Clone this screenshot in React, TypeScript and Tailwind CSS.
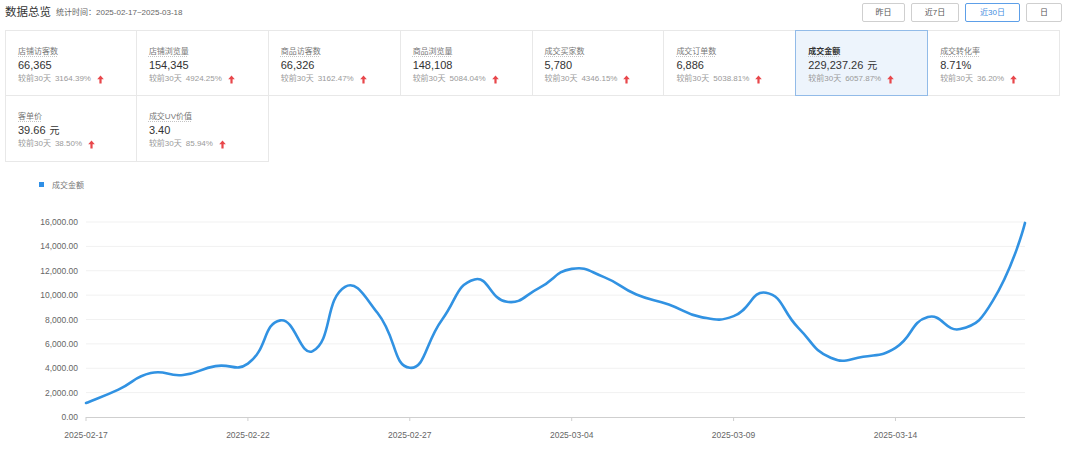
import React from 'react';

type Metric = { label: string; value: string; unit?: string; rate: string; active?: boolean };

const METRICS: Metric[] = [
  { label: '店铺访客数', value: '66,365', rate: '3164.39%' },
  { label: '店铺浏览量', value: '154,345', rate: '4924.25%' },
  { label: '商品访客数', value: '66,326', rate: '3162.47%' },
  { label: '商品浏览量', value: '148,108', rate: '5084.04%' },
  { label: '成交买家数', value: '5,780', rate: '4346.15%' },
  { label: '成交订单数', value: '6,886', rate: '5038.81%' },
  { label: '成交金额', value: '229,237.26', unit: '元', rate: '6057.87%', active: true },
  { label: '成交转化率', value: '8.71%', rate: '36.20%' },
  { label: '客单价', value: '39.66', unit: '元', rate: '38.50%' },
  { label: '成交UV价值', value: '3.40', rate: '85.94%' },
];

const SALES = [
  1150, 2250, 3600, 3450, 4180, 4380, 7930, 5410, 10680, 8550,
  4040, 8000, 11290, 9450, 10600, 12150, 11475, 10055, 9235, 8200,
  8280, 10190, 7320, 4860, 4940, 5680, 8200, 7210, 9500, 15930,
];

const DATES = ['2025-02-17', '2025-02-22', '2025-02-27', '2025-03-04', '2025-03-09', '2025-03-14'];

const X0 = 86;
const X1 = 1025;
const Y0 = 416;
const Y16K = 221;

const px = (i: number) => X0 + ((X1 - X0) / (SALES.length - 1)) * i;
const py = (v: number) => Y0 - ((Y0 - Y16K) * v) / 16000;

// echarts-style smooth line
function smoothPath(pts: { x: number; y: number }[], smooth = 0.5) {
  let d = `M${pts[0].x},${pts[0].y}`;
  let c0x = pts[0].x;
  let c0y = pts[0].y;
  for (let i = 1; i < pts.length; i++) {
    const p = pts[i];
    const prev = pts[i - 1];
    const next = pts[i + 1];
    let c1x = p.x;
    let c1y = p.y;
    let nx = p.x;
    let ny = p.y;
    if (next) {
      const vx = (next.x - prev.x) * smooth;
      const vy = (next.y - prev.y) * smooth;
      const l0 = Math.hypot(p.x - prev.x, p.y - prev.y);
      const l1 = Math.hypot(next.x - p.x, next.y - p.y);
      const r0 = l0 / (l0 + l1);
      const r1 = l1 / (l0 + l1);
      c1x = p.x - vx * r0;
      c1y = p.y - vy * r0;
      nx = p.x + vx * r1;
      ny = p.y + vy * r1;
    }
    d += ` C${c0x.toFixed(1)},${c0y.toFixed(1)} ${c1x.toFixed(1)},${c1y.toFixed(1)} ${p.x.toFixed(1)},${p.y.toFixed(1)}`;
    c0x = nx;
    c0y = ny;
  }
  return d;
}

const UpArrow = () => (
  <svg width="7" height="9" viewBox="0 0 7 9" className="ml-[6px] inline-block">
    <path d="M3.5 0.5 L6.8 4.2 L4.6 4.2 L4.6 8.6 L2.4 8.6 L2.4 4.2 L0.2 4.2 Z" fill="#e8474b" />
  </svg>
);

const MetricCard: React.FC<{ m: Metric; index: number }> = ({ m, index }) => {
  const firstRow = index < 8;
  const firstCol = index % 8 === 0;
  return (
    <div
      className={`h-[66px] pl-[12px] pt-[12px] border-r border-b ${firstRow ? 'border-t' : ''} ${firstCol ? 'border-l' : ''} ${
        m.active
          ? 'relative z-10 bg-[#edf4fc] border-[#92bbe8] shadow-[-1px_0_0_0_#92bbe8]'
          : 'bg-white border-[#e8e8e8]'
      }`}
    >
      <div className="h-[12px] leading-[12px]">
        <span
          className={`text-[8px] underline decoration-dotted decoration-[#c4c4c4] underline-offset-[2px] ${
            m.active ? 'font-bold text-[#333]' : 'text-[#777]'
          }`}
        >
          {m.label}
        </span>
      </div>
      <div className="mt-[2px] h-[16px] leading-[16px] text-[11px] text-[#333]">
        {m.value}
        {m.unit && <span className="ml-[4px] text-[10px]">{m.unit}</span>}
      </div>
      <div className="h-[12px] leading-[12px] text-[8px] text-[#9a9a9a] flex items-center">
        <span>较前30天</span>
        <span className="ml-[4px]">{m.rate}</span>
        <UpArrow />
      </div>
    </div>
  );
};

const SalesChart = () => {
  const pts = SALES.map((v, i) => ({ x: px(i), y: py(v) }));
  const yTicks = [0, 2000, 4000, 6000, 8000, 10000, 12000, 14000, 16000];
  return (
    <svg width="1066" height="287" viewBox="0 170 1066 287" className="block">
      <rect x="39" y="181" width="5" height="5" fill="#2f8fe6" />
      <text x="52" y="186.5" fontSize="8" fill="#777">成交金额</text>
      {yTicks.map(t => (
        <g key={t}>
          {t > 0 && <line x1={X0} x2={X1} y1={py(t)} y2={py(t)} stroke="#f1f1f1" strokeWidth="1" />}
          <text x="78" y={py(t) + 3} fontSize="8.5" fill="#666" textAnchor="end">
            {t.toLocaleString('en-US', { minimumFractionDigits: 2 })}
          </text>
        </g>
      ))}
      <line x1={X0} x2={X1} y1={Y0 + 0.5} y2={Y0 + 0.5} stroke="#cfcfcf" strokeWidth="1" />
      {DATES.map((d, k) => {
        const x = px(k * 5);
        return (
          <g key={d}>
            <line x1={x} x2={x} y1={Y0} y2={Y0 + 4} stroke="#cfcfcf" strokeWidth="1" />
            <text x={x} y={437} fontSize="8.5" fill="#666" textAnchor="middle">{d}</text>
          </g>
        );
      })}
      <path d={smoothPath(pts)} fill="none" stroke="#3192e2" strokeWidth="2.6" strokeLinejoin="round" strokeLinecap="round" />
    </svg>
  );
};

const RANGES = [
  { label: '昨日', w: 'w-[43px]' },
  { label: '近7日', w: 'w-[48px]' },
  { label: '近30日', w: 'w-[55px]', active: true },
  { label: '日', w: 'w-[36px]' },
];

export default function App() {
  return (
    <div
      className="w-[1066px] h-[457px] bg-white overflow-hidden"
      style={{ fontFamily: '"Liberation Sans", "Noto Sans CJK SC", sans-serif' }}
    >
      <div className="h-[30px] flex items-start pt-[3px] pl-[5px] pr-[4px]">
        <div className="h-[20px] flex items-center">
          <span className="text-[11.5px] text-[#333]">数据总览</span>
          <span className="ml-[5px] text-[8px] text-[#666]">统计时间：2025-02-17~2025-03-18</span>
        </div>
        <div className="ml-auto flex gap-[6px]">
          {RANGES.map(r => (
            <button
              key={r.label}
              className={`${r.w} h-[19px] rounded-[2px] border text-[8px] leading-none ${
                r.active ? 'border-[#5d9fe8] text-[#3f8de0]' : 'border-[#cfcfcf] text-[#555]'
              } bg-white`}
            >
              {r.label}
            </button>
          ))}
        </div>
      </div>
      <div className="ml-[5px] w-[1055px] grid grid-cols-8">
        {METRICS.map((m, i) => (
          <MetricCard key={m.label} m={m} index={i} />
        ))}
      </div>
      <div className="mt-[9px]">
        <SalesChart />
      </div>
    </div>
  );
}
